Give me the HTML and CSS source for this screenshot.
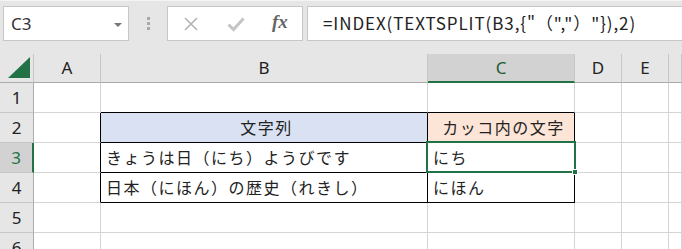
FILE: index.html
```html
<!DOCTYPE html>
<html lang="ja">
<head>
  <meta charset="UTF-8" />
  <title>TEXTSPLIT</title>
  <link rel="stylesheet" href="styles.css">
</head>
<body>
  <div class="toolbar">
    <div class="namebox">
      <span>C3</span>
      <span class="caret"></span>
    </div>
    <div class="grip"><i></i><i></i><i></i></div>
    <div class="fxbtns">
      <svg class="icon" width="16" height="16" viewBox="0 0 16 16">
        <path d="M2 2 L14 14 M14 2 L2 14" stroke="#b3b3b3" stroke-width="1.6" fill="none"/>
      </svg>
      <svg class="icon" width="18" height="16" viewBox="0 0 18 16">
        <path d="M1.5 8.5 L6.5 13.5 L16.5 2.5" stroke="#c4c4c4" stroke-width="3" fill="none"/>
      </svg>
      <span class="fx">fx</span>
    </div>
    <div class="formula">=INDEX(TEXTSPLIT(B3,{"（","）"}),2)</div>
  </div>

  <div class="sheet">
    <div class="corner"><span class="tri"></span></div>
    <div class="colhead">A</div>
    <div class="colhead">B</div>
    <div class="colhead sel">C</div>
    <div class="colhead">D</div>
    <div class="colhead">E</div>
    <div class="colhead"></div>

    <div class="rowhead">1</div>
    <div class="cell"></div>
    <div class="cell edge-b"></div>
    <div class="cell edge-b"></div>
    <div class="cell"></div>
    <div class="cell"></div>
    <div class="cell"></div>

    <div class="rowhead">2</div>
    <div class="cell edge-r"></div>
    <div class="cell tb head-blue">文字列</div>
    <div class="cell tb head-peach">カッコ内の文字</div>
    <div class="cell"></div>
    <div class="cell"></div>
    <div class="cell"></div>

    <div class="rowhead sel">3</div>
    <div class="cell edge-r"></div>
    <div class="cell tb">きょうは日（にち）ようびです</div>
    <div class="cell tb active">にち<span class="cursor"><i class="handle"></i></span></div>
    <div class="cell"></div>
    <div class="cell"></div>
    <div class="cell"></div>

    <div class="rowhead">4</div>
    <div class="cell edge-r"></div>
    <div class="cell tb">日本（にほん）の歴史（れきし）</div>
    <div class="cell tb">にほん</div>
    <div class="cell"></div>
    <div class="cell"></div>
    <div class="cell"></div>

    <div class="rowhead">5</div>
    <div class="cell"></div>
    <div class="cell"></div>
    <div class="cell"></div>
    <div class="cell"></div>
    <div class="cell"></div>
    <div class="cell"></div>

    <div class="rowhead">6</div>
    <div class="cell"></div>
    <div class="cell"></div>
    <div class="cell"></div>
    <div class="cell"></div>
    <div class="cell"></div>
    <div class="cell"></div>
  </div>
</body>
</html>
```

FILE: styles.css
```css
* { box-sizing: border-box; }
body {
  margin: 0;
  background: #fff;
  font-family: "Noto Sans", "Noto Sans CJK JP", sans-serif;
  color: #222;
  overflow: hidden;
}

/* formula bar */
.toolbar {
  height: 54px;
  background: #e6e6e6;
  border-top: 1px solid #f4f4f4;
  display: flex;
  align-items: flex-start;
  padding: 5px 0 0 3px;
}
.namebox {
  width: 126px;
  height: 35px;
  background: #fff;
  border: 1px solid #c6c6c6;
  display: flex;
  align-items: center;
  justify-content: space-between;
  padding: 0 6px 0 7px;
  font-size: 17px;
  color: #333;
}
.caret {
  width: 0;
  height: 0;
  border-left: 4px solid transparent;
  border-right: 4px solid transparent;
  border-top: 4px solid #777;
  margin-top: 2px;
}
.grip {
  width: 38px;
  height: 35px;
  display: flex;
  flex-direction: column;
  align-items: center;
  justify-content: center;
  gap: 2px;
}
.grip i {
  width: 3px;
  height: 3px;
  background: #a9a9a9;
}
.fxbtns {
  width: 136px;
  height: 35px;
  background: #fff;
  border: 1px solid #c6c6c6;
  display: flex;
  align-items: center;
  padding-left: 15px;
}
.fxbtns .icon { margin-right: 28px; }
.fxbtns .icon + .icon { margin-right: 27px; }
.fx {
  font-family: "Liberation Serif", serif;
  font-style: italic;
  font-weight: bold;
  font-size: 19px;
  color: #666;
  margin-top: -3px;
}
.formula {
  flex: 1;
  margin-left: 4px;
  height: 35px;
  background: #fff;
  border: 1px solid #c6c6c6;
  border-right: none;
  padding-left: 15px;
  line-height: 31px;
  font-family: "Noto Sans CJK JP", sans-serif;
  font-size: 17px;
  letter-spacing: 0.9px;
  color: #222;
  white-space: nowrap;
}

/* grid */
.sheet {
  display: grid;
  grid-template-columns: 34px 67px 327px 147px 47px 47px 1fr;
  grid-template-rows: 29px repeat(6, 30px);
  font-size: 17px;
}
.sheet > div {
  border-right: 1px solid #d4d4d4;
  border-bottom: 1px solid #d4d4d4;
}
.corner {
  background: #e6e6e6;
  position: relative;
}
.sheet > .corner { border-right-color: #c6c6c6; border-bottom-color: #ababab; }
.tri {
  position: absolute;
  right: 3px;
  bottom: 4px;
  width: 0;
  height: 0;
  border-left: 22px solid transparent;
  border-bottom: 21px solid #217346;
}
.sheet > .colhead {
  background: #e6e6e6;
  border-right-color: #c6c6c6;
  border-bottom-color: #ababab;
  text-align: center;
  line-height: 28px;
  color: #222;
}
.sheet > .colhead.sel {
  background: #d2d2d2;
  border-bottom: 2px solid #217346;
  color: #1f5c3a;
}
.sheet > .rowhead {
  background: #e6e6e6;
  border-right-color: #ababab;
  border-bottom-color: #c6c6c6;
  text-align: center;
  line-height: 29px;
  color: #222;
}
.sheet > .rowhead.sel {
  background: #d2d2d2;
  border-right: 2px solid #217346;
  color: #217346;
}

.cell {
  font-family: "Noto Sans CJK JP", sans-serif;
  font-size: 16px;
  letter-spacing: 1.5px;
  line-height: 29px;
  padding-left: 5px;
  white-space: nowrap;
  color: #222;
}
.sheet > .edge-b { border-bottom-color: #000; }
.sheet > .edge-r { border-right-color: #000; }
.sheet > .tb {
  border-right-color: #000;
  border-bottom-color: #000;
}
.head-blue {
  background: #d9e1f2;
  text-align: center;
}
.head-peach {
  background: #fce4d6;
  text-align: center;
}

/* active cell */
.active { position: relative; }
.cursor {
  position: absolute;
  left: -2px;
  top: -2px;
  right: -2px;
  bottom: -1px;
  border: 2px solid #217346;
}
.handle {
  position: absolute;
  right: -4px;
  bottom: -4px;
  width: 6px;
  height: 6px;
  background: #217346;
  border: 1px solid #fff;
}
```
